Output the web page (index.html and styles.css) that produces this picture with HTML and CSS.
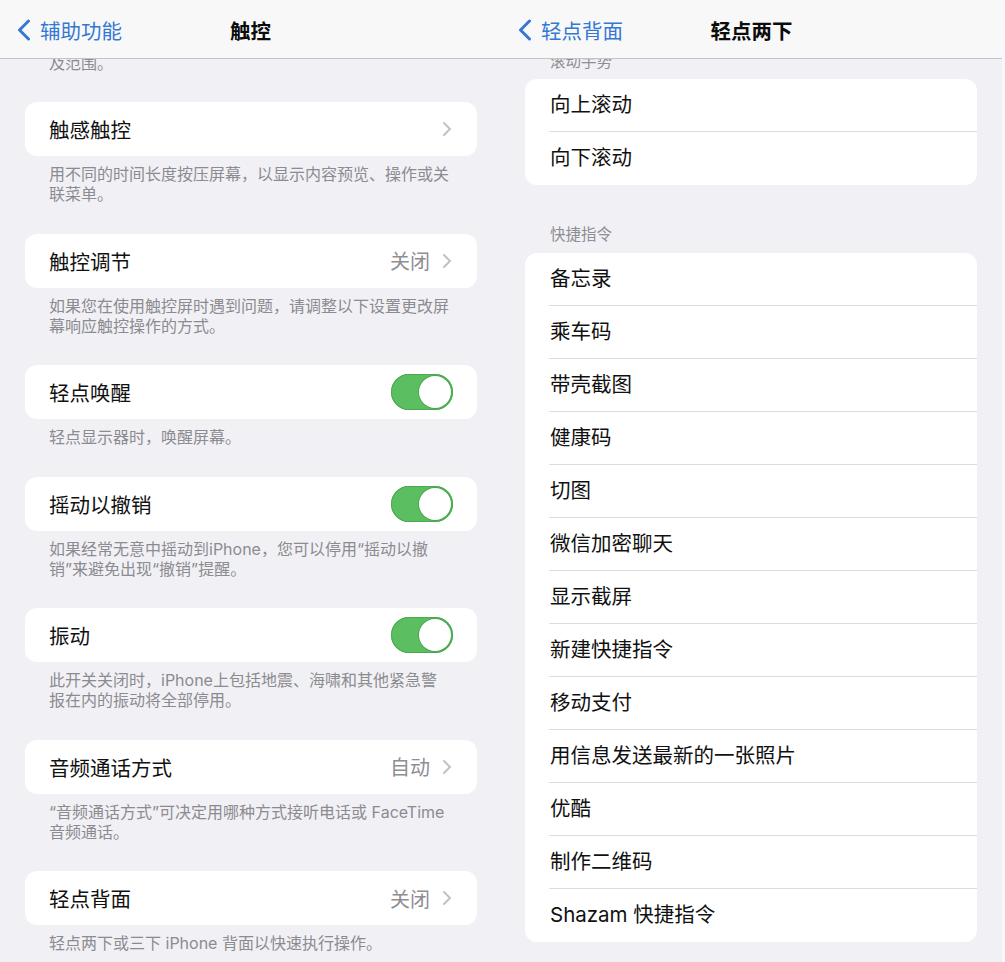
FILE: index.html
```html
<!DOCTYPE html>
<html lang="zh-CN">
<head>
<meta charset="UTF-8">
<title>触控 / 轻点两下</title>
<link rel="stylesheet" href="styles.css">
</head>
<body>
<div class="screens">

	<!-- left screen: 触控 -->
	<div class="screen left">
		<div class="navbar">
			<div class="back">
				<svg class="back-icon" width="14" height="22" viewBox="0 0 14 22"><path d="M11.5 2 L2.5 11 L11.5 20" fill="none" stroke="currentColor" stroke-width="3" stroke-linecap="round" stroke-linejoin="round"/></svg>
				<span>辅助功能</span>
			</div>
			<div class="title">触控</div>
			<div></div>
		</div>
		<div class="content">
			<div class="footnote first">及范围。</div>

			<div class="card">
				<div class="row">
					<span class="label">触感触控</span>
					<span class="detail"><svg class="chev" width="10" height="16" viewBox="0 0 10 16"><path d="M2 2 L8 8 L2 14" fill="none" stroke="currentColor" stroke-width="2" stroke-linecap="round" stroke-linejoin="round"/></svg></span>
				</div>
			</div>
			<div class="footnote">用不同的时间长度按压屏幕，以显示内容预览、操作或关<br>联菜单。</div>

			<div class="card">
				<div class="row">
					<span class="label">触控调节</span>
					<span class="detail">关闭<svg class="chev" width="10" height="16" viewBox="0 0 10 16"><path d="M2 2 L8 8 L2 14" fill="none" stroke="currentColor" stroke-width="2" stroke-linecap="round" stroke-linejoin="round"/></svg></span>
				</div>
			</div>
			<div class="footnote">如果您在使用触控屏时遇到问题，请调整以下设置更改屏<br>幕响应触控操作的方式。</div>

			<div class="card">
				<div class="row">
					<span class="label">轻点唤醒</span>
					<span class="toggle on"><span class="knob"></span></span>
				</div>
			</div>
			<div class="footnote">轻点显示器时，唤醒屏幕。</div>

			<div class="card">
				<div class="row">
					<span class="label">摇动以撤销</span>
					<span class="toggle on"><span class="knob"></span></span>
				</div>
			</div>
			<div class="footnote">如果经常无意中摇动到iPhone，您可以停用“摇动以撤<br>销”来避免出现“撤销”提醒。</div>

			<div class="card">
				<div class="row">
					<span class="label">振动</span>
					<span class="toggle on"><span class="knob"></span></span>
				</div>
			</div>
			<div class="footnote">此开关关闭时，iPhone上包括地震、海啸和其他紧急警<br>报在内的振动将全部停用。</div>

			<div class="card">
				<div class="row">
					<span class="label">音频通话方式</span>
					<span class="detail">自动<svg class="chev" width="10" height="16" viewBox="0 0 10 16"><path d="M2 2 L8 8 L2 14" fill="none" stroke="currentColor" stroke-width="2" stroke-linecap="round" stroke-linejoin="round"/></svg></span>
				</div>
			</div>
			<div class="footnote">“音频通话方式”可决定用哪种方式接听电话或 FaceTime<br>音频通话。</div>

			<div class="card">
				<div class="row">
					<span class="label">轻点背面</span>
					<span class="detail">关闭<svg class="chev" width="10" height="16" viewBox="0 0 10 16"><path d="M2 2 L8 8 L2 14" fill="none" stroke="currentColor" stroke-width="2" stroke-linecap="round" stroke-linejoin="round"/></svg></span>
				</div>
			</div>
			<div class="footnote">轻点两下或三下 iPhone 背面以快速执行操作。</div>
		</div>
	</div>

	<!-- right screen: 轻点两下 -->
	<div class="screen right">
		<div class="navbar">
			<div class="back">
				<svg class="back-icon" width="14" height="22" viewBox="0 0 14 22"><path d="M11.5 2 L2.5 11 L11.5 20" fill="none" stroke="currentColor" stroke-width="3" stroke-linecap="round" stroke-linejoin="round"/></svg>
				<span>轻点背面</span>
			</div>
			<div class="title">轻点两下</div>
			<div></div>
		</div>
		<div class="content">
			<div class="section-head first">滚动手势</div>
			<div class="card list">
				<div class="item">向上滚动</div>
				<div class="item">向下滚动</div>
			</div>

			<div class="section-head">快捷指令</div>
			<div class="card list">
				<div class="item">备忘录</div>
				<div class="item">乘车码</div>
				<div class="item">带壳截图</div>
				<div class="item">健康码</div>
				<div class="item">切图</div>
				<div class="item">微信加密聊天</div>
				<div class="item">显示截屏</div>
				<div class="item">新建快捷指令</div>
				<div class="item">移动支付</div>
				<div class="item">用信息发送最新的一张照片</div>
				<div class="item">优酷</div>
				<div class="item">制作二维码</div>
				<div class="item">Shazam 快捷指令</div>
			</div>
		</div>
	</div>

</div>
</body>
</html>
```

FILE: styles.css
```css
html, body {
	margin: 0px;
	padding: 0px;
	height: 100%;
	background: #f8f8f9;
	font-family: Inter, "Noto Sans CJK SC", sans-serif;
	color: #111111;
}
.screens {
	display: flex;
	width: 1002px;
	height: 962px;
}
.screen {
	display: flex;
	flex-direction: column;
	width: 501px;
	height: 962px;
	background: #f1f1f5;
	overflow: hidden;
}
.navbar {
	display: grid;
	grid-template-columns: 1fr auto 1fr;
	align-items: center;
	height: 58px;
	flex: none;
	background: #f8f8f8;
	border-bottom: 1px solid #c4c4c8;
	position: relative;
	z-index: 2;
}
.back {
	display: flex;
	align-items: center;
	gap: 9px;
	padding-left: 17px;
	color: #3478d4;
	font-size: 20.5px;
	padding-top: 2px;
}
.back-icon {
	display: block;
}
.title {
	font-size: 20.5px;
	font-weight: 600;
	color: #0c0c0c;
	padding-top: 2px;
}
.content {
	flex: 1;
	padding: 0px 24px 0px 25px;
}
.right .content {
	padding: 0px 25px 0px 24px;
}
.card {
	background: #ffffff;
	border-radius: 12px;
}
.row {
	display: flex;
	align-items: center;
	justify-content: space-between;
	height: 54px;
	padding: 0px 24px 0px 24px;
}
.label {
	font-size: 20.5px;
}
.detail {
	display: flex;
	align-items: center;
	gap: 12px;
	font-size: 20px;
	color: #8e8e93;
}
.chev {
	display: block;
	color: #c2c2c6;
	margin-right: 1px;
}
.toggle {
	position: relative;
	width: 62px;
	height: 36px;
	border-radius: 18px;
	background: #5bbf62;
	box-shadow: inset 0 0 0 1px #4aa852;
}
.knob {
	position: absolute;
	top: 2px;
	right: 2px;
	width: 32px;
	height: 32px;
	border-radius: 50%;
	background: #ffffff;
	box-shadow: 0 0 0 1px #4aa852;
}
.footnote {
	padding: 8px 0px 0px 24px;
	margin-bottom: 29.5px;
	font-size: 16px;
	line-height: 20px;
	color: #8b8b90;
}
.footnote.first {
	padding-top: 0px;
	margin-top: -6px;
	margin-bottom: 29px;
}
.section-head {
	margin-top: 40px;
	padding: 0px 0px 8px 25px;
	font-size: 15.5px;
	line-height: 20px;
	color: #8e8e93;
}
.section-head.first {
	margin-top: -7px;
	padding-bottom: 7px;
}
.list {
	padding-left: 24px;
}
.item {
	height: 53px;
	line-height: 52px;
	padding-left: 1px;
	font-size: 20.5px;
	border-bottom: 1px solid #dcdce0;
	box-sizing: border-box;
}
.item:last-child {
	border-bottom: none;
}
```
